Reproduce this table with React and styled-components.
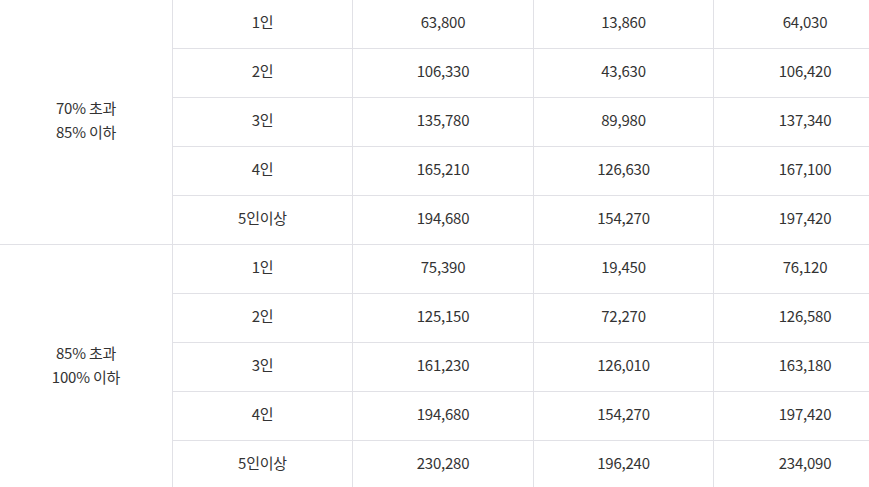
import styled, { createGlobalStyle } from 'styled-components';

const GlobalStyle = createGlobalStyle`
  html, body {
    margin: 0;
    padding: 0;
    background: #ffffff;
    overflow: hidden;
  }
`;

const Wrapper = styled.div`
  width: 869px;
  height: 487px;
  overflow: hidden;
`;

const Table = styled.table`
  width: 896px;
  border-collapse: separate;
  border-spacing: 0;
  table-layout: fixed;
  font-family: "Noto Sans CJK KR", "Noto Sans", sans-serif;
  font-size: 15px;
  color: #333333;
`;

const Col = styled.col`
  width: ${(p) => p.$w}px;
`;

const Cell = styled.td`
  box-sizing: border-box;
  height: 49px;
  padding: 0 0 4px;
  text-align: center;
  vertical-align: middle;
  border-bottom: 1px solid #e1e1e6;
  border-left: ${(p) => (p.$lead ? 'none' : '1px solid #e1e1e6')};
  line-height: 24px;
  letter-spacing: -0.2px;
`;

const GroupCell = styled(Cell)`
  border-left: none;
  border-right: 1px solid #e1e1e6;
`;

const widths = [173, 179, 181, 180, 183];

const groups = [
  {
    label: ['70% 초과', '85% 이하'],
    rows: [
      ['1인', '63,800', '13,860', '64,030'],
      ['2인', '106,330', '43,630', '106,420'],
      ['3인', '135,780', '89,980', '137,340'],
      ['4인', '165,210', '126,630', '167,100'],
      ['5인이상', '194,680', '154,270', '197,420'],
    ],
  },
  {
    label: ['85% 초과', '100% 이하'],
    rows: [
      ['1인', '75,390', '19,450', '76,120'],
      ['2인', '125,150', '72,270', '126,580'],
      ['3인', '161,230', '126,010', '163,180'],
      ['4인', '194,680', '154,270', '197,420'],
      ['5인이상', '230,280', '196,240', '234,090'],
    ],
  },
];

export default function App() {
  return (
    <Wrapper>
      <GlobalStyle />
      <Table>
        <colgroup>
          {widths.map((w, i) => (
            <Col key={i} $w={w} />
          ))}
        </colgroup>
        <tbody>
          {groups.map((g) =>
            g.rows.map((r, i) => (
              <tr key={g.label[0] + i}>
                {i === 0 && (
                  <GroupCell rowSpan={g.rows.length}>
                    {g.label[0]}
                    <br />
                    {g.label[1]}
                  </GroupCell>
                )}
                {r.map((v, j) => (
                  <Cell key={j} $lead={j === 0}>
                    {v}
                  </Cell>
                ))}
              </tr>
            ))
          )}
        </tbody>
      </Table>
    </Wrapper>
  );
}
